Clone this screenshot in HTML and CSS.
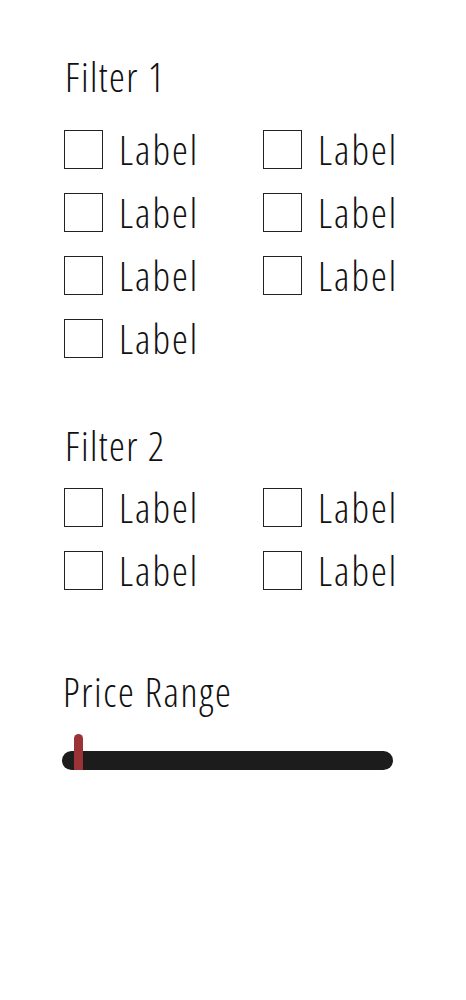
FILE: index.html
```
<!DOCTYPE html>
<html lang="en">
<head>
  <meta charset="UTF-8">
  <title>Filters</title>
  <link rel="stylesheet" href="styles.css">
</head>
<body>

<div class="filters">
  <div class="group">
    <h2>Filter 1</h2>
    <div class="options">
      <label class="option"><span class="box"></span>Label</label>
      <label class="option"><span class="box"></span>Label</label>
      <label class="option"><span class="box"></span>Label</label>
      <label class="option"><span class="box"></span>Label</label>
      <label class="option"><span class="box"></span>Label</label>
      <label class="option"><span class="box"></span>Label</label>
      <label class="option"><span class="box"></span>Label</label>
    </div>
  </div>

  <div class="group second">
    <h2>Filter 2</h2>
    <div class="options">
      <label class="option"><span class="box"></span>Label</label>
      <label class="option"><span class="box"></span>Label</label>
      <label class="option"><span class="box"></span>Label</label>
      <label class="option"><span class="box"></span>Label</label>
    </div>
  </div>

  <div class="group price">
    <h2>Price Range</h2>
    <div class="slider">
      <span class="thumb"></span>
    </div>
  </div>
</div>

</body>
</html>
```
FILE: styles.css
```
body {
  margin: 0;
  background: white;
  font-family: "Open Sans", sans-serif;
  font-stretch: 75%;
  font-weight: 300;
  color: #111;
}
.filters {
  padding: 53px 0 0 64px;
}
.group h2 {
  margin: 0 0 29px 1px;
  font-size: 40px;
  font-weight: 300;
  line-height: 48px;
  letter-spacing: 1.4px;
}
.options {
  display: grid;
  grid-template-columns: 199px 199px;
  row-gap: 24px;
}
.option {
  display: flex;
  align-items: center;
  gap: 16px;
  height: 39px;
  font-size: 40px;
  letter-spacing: 2px;
}
.box {
  width: 37px;
  height: 37px;
  border: 1px solid #222;
}
.second {
  margin-top: 64px;
}
.second h2 {
  margin-bottom: 18px;
}
.price {
  margin-top: 78px;
}
.price h2 {
  margin: 0 0 35px -1px;
  letter-spacing: 1.7px;
}
.slider {
  position: relative;
  width: 331px;
  height: 19px;
  margin-left: -2px;
  background: #1c1c1c;
  border-radius: 10px;
}
.thumb {
  position: absolute;
  left: 12px;
  top: -17px;
  width: 9px;
  height: 54px;
  background: #9a3236;
  border-radius: 5px;
}
```
